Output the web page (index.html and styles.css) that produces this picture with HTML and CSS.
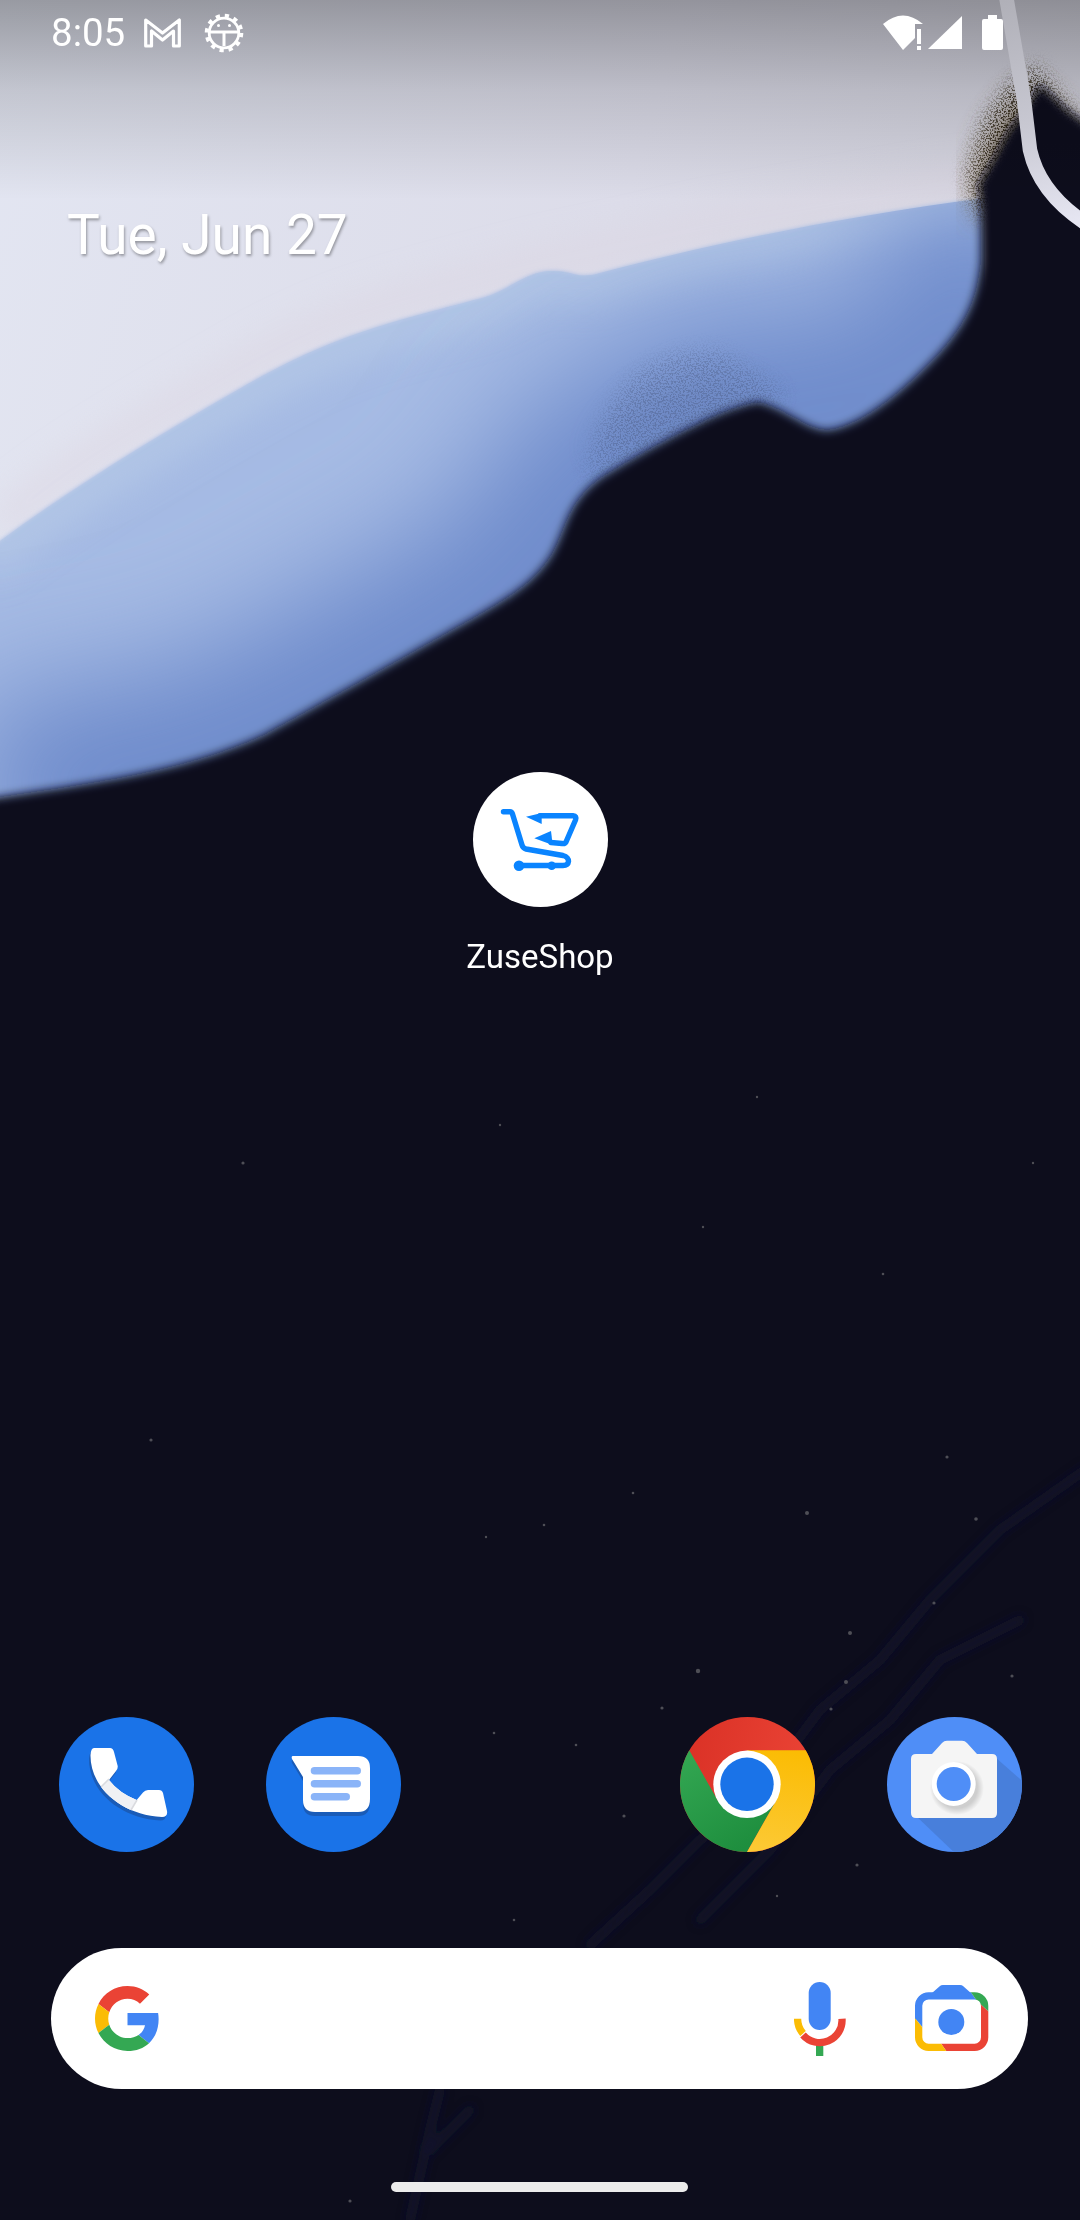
FILE: index.html
```html
<!DOCTYPE html>
<html lang="en">
<head>
<meta charset="utf-8">
<title>Home screen</title>
<link rel="stylesheet" href="styles.css">
</head>
<body>
<main class="screen">
  <svg class="wallpaper" viewBox="0 0 1080 2220" aria-hidden="true">
    <defs>
      <linearGradient id="sky" x1="0" y1="0" x2="1" y2="0.25">
        <stop offset="0" stop-color="#e3e6f2"/>
        <stop offset="0.6" stop-color="#dcdce9"/>
        <stop offset="1" stop-color="#d3d3de"/>
      </linearGradient>
      <linearGradient id="scrim" x1="0" y1="0" x2="0" y2="1">
        <stop offset="0" stop-color="#000" stop-opacity="0.33"/>
        <stop offset="0.45" stop-color="#000" stop-opacity="0.14"/>
        <stop offset="1" stop-color="#000" stop-opacity="0"/>
      </linearGradient>
      <linearGradient id="hook" gradientUnits="userSpaceOnUse" x1="1005" y1="0" x2="1060" y2="226">
        <stop offset="0" stop-color="#b0b0b8"/>
        <stop offset="0.55" stop-color="#c8c8d2"/>
        <stop offset="1" stop-color="#e6e6f2"/>
      </linearGradient>
      <clipPath id="blueClip"><path id="blueShape" d="M-20 556 C60 495 150 440 241 388 S380 325 482 298 C510 290 525 272 550 271 S575 280 600 273 C700 247 830 218 985 198 V460 L500 820 L-20 830Z"/></clipPath>
      <filter id="soft" x="-5%" y="-5%" width="110%" height="110%"><feGaussianBlur stdDeviation="2"/></filter>
      <filter id="edge" x="-5%" y="-5%" width="110%" height="110%"><feGaussianBlur stdDeviation="5"/></filter>
      <filter id="wide" x="-30%" y="-30%" width="160%" height="160%"><feGaussianBlur stdDeviation="60"/></filter>
      <filter id="mid" x="-20%" y="-20%" width="140%" height="140%"><feGaussianBlur stdDeviation="16"/></filter>
      <filter id="streak" x="-10%" y="-10%" width="120%" height="120%"><feGaussianBlur stdDeviation="5"/></filter>
      <filter id="specks" x="-30%" y="-30%" width="160%" height="160%">
        <feGaussianBlur in="SourceGraphic" stdDeviation="9" result="b"/>
        <feTurbulence type="fractalNoise" baseFrequency="0.6" numOctaves="2" seed="7"/>
        <feColorMatrix values="0 0 0 0 0  0 0 0 0 0  0 0 0 0 0  7 0 0 0 -3.300" result="n"/>
        <feComposite in="b" in2="n" operator="in"/>
      </filter>
    </defs>
    <rect class="base" width="1080" height="2220"/>
    <rect width="1080" height="830" fill="url(#sky)"/>
    <path class="blush" filter="url(#mid)" d="M0 525 C60 470 150 420 241 368 S380 305 482 278 S600 253 700 228 L985 178"/>
    <use href="#blueShape" class="blue-fill" filter="url(#soft)"/>
    <g clip-path="url(#blueClip)">
      <path class="blue-light" filter="url(#mid)" d="M-20 560 C60 500 150 445 241 393 S380 330 482 303 C510 295 525 277 550 276 S575 285 600 278 C700 252 830 223 985 203"/>
      <path class="blue-deep" filter="url(#wide)" d="M979 205 V261 C975 300 965 325 923 366 S850 425 826 428 C805 428 790 410 757 400 C720 405 650 445 600 475 C565 500 565 525 551 550 C535 580 500 600 468 618 C420 645 344 688 262 733 C180 770 100 780 -20 798"/>
    </g>
    <path class="haze" filter="url(#mid)" d="M590 460 C610 400 650 370 720 370 L780 395 L700 440Z"/>
    <path class="speck-dark" filter="url(#specks)" d="M585 480 C600 395 640 345 720 350 L790 395 L700 430Z"/>
    <path class="brown" filter="url(#mid)" d="M1030 90 L1008 112 L990 140 L976 175 L978 215 H1040 L1076 130Z"/>
    <path class="speck-brown" filter="url(#specks)" d="M1035 65 L1008 88 L985 120 L968 175 L978 215 H1040 L1085 130Z"/>
    <path class="base" filter="url(#edge)" d="M1026 108 L1008 132 L992 162 L979 184 L981 205 V261 C977 300 967 327 925 368 S852 427 828 430 C807 430 792 412 759 402 C722 407 652 447 602 477 C567 502 567 527 553 552 C537 582 502 602 470 620 C422 647 346 690 264 735 C182 772 102 782 -20 800 V2240 H1100 V133 L1067 110 L1040 84Z"/>
    <rect width="1080" height="200" fill="url(#scrim)"/>
    <path fill="none" stroke="url(#hook)" stroke-width="14.500" stroke-linecap="round" d="M1005 -10 L1024 100 L1030 150 Q1040 195 1090 226"/>
    <g class="streaks" filter="url(#streak)">
      <path d="M1085 1470 L1000 1530 L930 1600 L880 1660 L820 1710 L760 1790 L700 1840 L650 1890 L590 1945"/>
      <path d="M1020 1620 L940 1660 L890 1720 L830 1770 L770 1850 L700 1920"/>
      <path d="M440 2090 L430 2130 L410 2220"/>
      <path d="M470 2110 L430 2150"/>
    </g>
    <g class="stars">
      <circle cx="807" cy="1513" r="2"/><circle cx="698" cy="1671" r="2.200"/><circle cx="850" cy="1633" r="2"/>
      <circle cx="846" cy="1682" r="2"/><circle cx="831" cy="1709" r="1.600"/><circle cx="662" cy="1708" r="1.600"/>
      <circle cx="624" cy="1816" r="1.600"/><circle cx="857" cy="1865" r="1.600"/><circle cx="976" cy="1519" r="1.800"/>
      <circle cx="934" cy="1603" r="1.600"/><circle cx="1012" cy="1676" r="1.600"/><circle cx="494" cy="1733" r="1.300"/>
      <circle cx="576" cy="1745" r="1.300"/><circle cx="947" cy="1457" r="1.600"/><circle cx="633" cy="1493" r="1.300"/>
      <circle cx="544" cy="1525" r="1.300"/><circle cx="486" cy="1537" r="1.200"/><circle cx="350" cy="2201" r="1.600"/>
      <circle cx="514" cy="1920" r="1.300"/><circle cx="777" cy="1896" r="1.200"/><circle cx="243" cy="1163" r="1.600"/>
      <circle cx="151" cy="1440" r="1.600"/><circle cx="883" cy="1274" r="1.300"/><circle cx="703" cy="1227" r="1.200"/>
      <circle cx="1033" cy="1163" r="1.200"/><circle cx="757" cy="1097" r="1.200"/><circle cx="500" cy="1125" r="1.200"/>
    </g>
  </svg>

  <div class="ui">
    <header class="status">
      <span class="time">8:05</span>
      <svg class="ic-gmail" viewBox="143 18 38 30"><path fill="none" stroke="#fff" stroke-width="3.200" stroke-linejoin="round" d="M144.700 46 V20 L161.500 33 L178.300 20 V46 H172.500 V31 L161.500 40 L150.500 31 V46Z"/></svg>
      <svg class="ic-gear" viewBox="0 0 40 40">
        <circle cx="20" cy="20" r="17.300" fill="none" stroke="#fff" stroke-width="4" stroke-dasharray="4.200 4.890"/>
        <circle cx="20" cy="20" r="14.800" fill="none" stroke="#fff" stroke-width="2.800"/>
        <path fill="#fff" d="M6 17.500 H34 V20.500 H21.500 V33 H18.500 V20.500 H6Z"/>
        <circle cx="14.500" cy="12.500" r="1.500" fill="#fff"/><circle cx="25.500" cy="12.500" r="1.500" fill="#fff"/>
      </svg>
      <span class="status-gap"></span>
      <svg class="ic-wifi" viewBox="883 15 40 35">
        <path fill="#fff" d="M883 24 Q903 7 923 24 H915 V38 L903 50Z"/>
        <rect x="917" y="29" width="4" height="15" fill="#fff"/><rect x="917" y="46" width="4" height="4" fill="#fff"/>
      </svg>
      <svg class="ic-signal" viewBox="928 16 34 33"><path fill="#fff" d="M928 49 L962 16 V49Z"/></svg>
      <svg class="ic-battery" viewBox="982 15 21 35"><path fill="#fff" d="M988 15 H997 V19 H1001 Q1003 19 1003 21 V48 Q1003 50 1001 50 H984 Q982 50 982 48 V21 Q982 19 984 19 H988Z"/></svg>
    </header>

    <p class="date">Tue, Jun 27</p>

    <section class="app">
      <svg class="icon" viewBox="0 0 135 135">
        <circle cx="67.500" cy="67.500" r="67.500" fill="#fff"/>
        <g fill="none" stroke="#0a84ff" stroke-width="5.400" stroke-linecap="round" stroke-linejoin="round">
          <path d="M30.500 39.700 H37 Q38.700 39.700 39.500 42 L49 73 Q50 76.300 53 77 L90 83.500 Q95.500 85 95.500 89.500 Q95 93.500 90 93.500 H47"/>
          <path d="M67 43.700 H100 Q104 44 102.500 48 L93 70 Q92 72 89 71.500 L78 70.500"/>
        </g>
        <g fill="#0a84ff">
          <path d="M53 44.700 L68.700 41 V52Z"/><path d="M61.300 66.300 L78 59 L79.700 73Z"/>
          <circle cx="46" cy="93.700" r="5.300"/><circle cx="78.700" cy="93.700" r="4.300"/>
        </g>
      </svg>
      <span class="label">ZuseShop</span>
    </section>

    <nav class="dock">
      <svg class="icon" viewBox="0 0 135 135">
        <defs>
          <clipPath id="handset"><path d="M35 31 H51 Q54 31 55 35 L58.700 49 Q59 52 57 54 L50 63 Q60 76 77.700 83 L84 75.500 Q86 73 89 73 H100 Q103 73 104 76 L108 94 Q109 100 103 100 C62 98 31 70 31.500 38 Q32 31 35 31Z"/></clipPath>
        </defs>
        <circle cx="67.500" cy="67.500" r="67.500" fill="#1a73e8"/>
        <path fill="#1a5cb8" transform="translate(-1.500 3.500)" d="M35 31 H51 Q54 31 55 35 L58.700 49 Q59 52 57 54 L50 63 Q60 76 77.700 83 L84 75.500 Q86 73 89 73 H100 Q103 73 104 76 L108 94 Q109 100 103 100 C62 98 31 70 31.500 38 Q32 31 35 31Z"/>
        <path fill="#fff" d="M35 31 H51 Q54 31 55 35 L58.700 49 Q59 52 57 54 L50 63 Q60 76 77.700 83 L84 75.500 Q86 73 89 73 H100 Q103 73 104 76 L108 94 Q109 100 103 100 C62 98 31 70 31.500 38 Q32 31 35 31Z"/>
        <g clip-path="url(#handset)">
          <path fill="#f0f1f4" d="M50 62 L40 72 L68 98 L78 83Z"/>
          <path stroke="#dadbdf" stroke-width="1.600" fill="none" d="M50 62 L40 72 M78 83 L69 98"/>
        </g>
      </svg>
      <svg class="icon" viewBox="0 0 135 135">
        <circle cx="67.500" cy="67.500" r="67.500" fill="#1a73e8"/>
        <path fill="#1a5cb8" transform="translate(0 4)" d="M27 39 H92 Q104 39 104 51 V82 Q104 95 92 95 H49 Q37 95 37 83 V60 L26 42 Q25 39 27 39Z"/>
        <path fill="#fff" d="M27 39 H92 Q104 39 104 51 V82 Q104 95 92 95 H49 Q37 95 37 83 V60 L26 42 Q25 39 27 39Z"/>
        <g fill="#8ab4f8">
          <rect x="44.700" y="50" width="50.300" height="7.500" rx="3.750"/>
          <rect x="44.700" y="63" width="50.300" height="7.500" rx="3.750"/>
          <rect x="44.700" y="76" width="39.300" height="7.500" rx="3.750"/>
        </g>
      </svg>
      <span class="dock-empty"></span>
      <svg class="icon" viewBox="0 0 135 135">
        <defs>
          <linearGradient id="cRed" x1="0" y1="0" x2="1" y2="0.2"><stop offset="0" stop-color="#d93025"/><stop offset="1" stop-color="#ea4335"/></linearGradient>
          <linearGradient id="cGreen" x1="0" y1="0" x2="0.6" y2="1"><stop offset="0" stop-color="#34a853"/><stop offset="1" stop-color="#1e8e3e"/></linearGradient>
          <linearGradient id="cYellow" x1="0.5" y1="0" x2="0.4" y2="1"><stop offset="0" stop-color="#fbbc04"/><stop offset="1" stop-color="#fcc934"/></linearGradient>
        </defs>
        <circle cx="67.500" cy="67.500" r="67.500" fill="url(#cRed)"/>
        <path fill="url(#cGreen)" d="M9.300 33.300 L38 84 H96 L67 135 A67.500 67.500 0 0 1 9.300 33.300Z"/>
        <path fill="url(#cYellow)" d="M67 33.300 H125.700 A67.500 67.500 0 0 1 67 135 L96 84Z"/>
        <circle cx="67" cy="67.300" r="33.700" fill="#fff"/>
        <circle cx="67" cy="67.300" r="26.700" fill="#1a73e8"/>
      </svg>
      <svg class="icon" viewBox="0 0 135 135">
        <defs>
          <clipPath id="camClip"><circle cx="67.500" cy="67.500" r="67.500"/></clipPath>
          <radialGradient id="lensShade"><stop offset="0.75" stop-color="#000" stop-opacity="0.16"/><stop offset="1" stop-color="#000" stop-opacity="0"/></radialGradient>
        </defs>
        <circle cx="67.500" cy="67.500" r="67.500" fill="#4f8ef7"/>
        <path clip-path="url(#camClip)" fill="#487fdb" d="M108 40 L140 68 V140 H72 L28 98Z"/>
        <path fill="#f5f5f5" d="M45 37 L55 26 Q57 23.700 60 23.700 H75 Q78 23.700 80 26 L90 37 H105 Q110 37 110 42 V96 Q110 101 105 101 H29 Q24 101 24 96 V42 Q24 37 29 37Z"/>
        <circle cx="70" cy="71" r="27" fill="url(#lensShade)"/>
        <circle cx="66.700" cy="67" r="22" fill="#fff"/>
        <circle cx="66.700" cy="67" r="17" fill="#4f8ef7"/>
      </svg>
    </nav>

    <form class="search">
      <svg class="g-logo" viewBox="0 0 48 48">
        <path fill="#EA4335" d="M24 9.500c3.540 0 6.710 1.220 9.210 3.600l6.850-6.850C35.900 2.380 30.470 0 24 0 14.620 0 6.510 5.380 2.560 13.220l7.980 6.190C12.430 13.720 17.740 9.500 24 9.500z"/>
        <path fill="#4285F4" d="M46.980 24.550c0-1.570-.15-3.090-.38-4.550H24v9.020h12.940c-.58 2.960-2.260 5.480-4.780 7.180l7.730 6c4.510-4.180 7.090-10.360 7.090-17.650z"/>
        <path fill="#FBBC05" d="M10.530 28.590c-.48-1.450-.76-2.990-.76-4.590s.27-3.140.76-4.590l-7.980-6.190C.92 16.460 0 20.120 0 24c0 3.880.92 7.540 2.560 10.780l7.970-6.190z"/>
        <path fill="#34A853" d="M24 48c6.480 0 11.930-2.130 15.890-5.810l-7.730-6c-2.150 1.450-4.920 2.300-8.160 2.300-6.260 0-11.570-4.220-13.470-9.910l-7.980 6.190C6.510 42.620 14.620 48 24 48z"/>
      </svg>
      <span class="search-gap"></span>
      <svg class="mic" viewBox="0 0 52 74">
        <rect x="14.700" y="0" width="22" height="48" rx="11" fill="#4285f4"/>
        <rect x="22" y="60" width="7.300" height="14" fill="#34a853"/>
        <path fill="none" stroke="#ea4335" stroke-width="7.300" d="M9 53 A22.300 22.300 0 0 0 48 36.700"/>
        <path fill="none" stroke="#fbbc04" stroke-width="7.300" d="M3.600 36.700 A22.300 22.300 0 0 0 9 51.500"/>
      </svg>
      <svg class="lens" viewBox="0 0 74 67">
        <defs>
          <clipPath id="lBlue"><path d="M-1 -1 H50 L62 16 L8 43 L-1 32Z"/></clipPath>
          <clipPath id="lGreen"><path d="M50 -1 H75 V28 L62 16Z"/></clipPath>
          <clipPath id="lRed"><path d="M62 16 L75 28 V70 H34 L25 57Z"/></clipPath>
          <clipPath id="lYellow"><path d="M-1 32 L8 43 L25 57 L34 70 H-1Z"/></clipPath>
        </defs>
        <path fill="#4285f4" d="M17 8 L25 1 Q26 0 28 0 H45 Q47 0 48 1 L57 9Z"/>
        <g fill="none" stroke-width="7.300">
          <rect x="3.650" y="10.800" width="66" height="51.500" rx="10" stroke="#4285f4" clip-path="url(#lBlue)"/>
          <rect x="3.650" y="10.800" width="66" height="51.500" rx="10" stroke="#34a853" clip-path="url(#lGreen)"/>
          <rect x="3.650" y="10.800" width="66" height="51.500" rx="10" stroke="#ea4335" clip-path="url(#lRed)"/>
          <rect x="3.650" y="10.800" width="66" height="51.500" rx="10" stroke="#fbbc04" clip-path="url(#lYellow)"/>
        </g>
        <circle cx="36.300" cy="37" r="13" fill="#4285f4"/>
      </svg>
    </form>

    <div class="nav-handle"></div>
  </div>
</main>
</body>
</html>
```
FILE: styles.css
```css
* { box-sizing: border-box; }
html, body { margin: 0; padding: 0; background: #10101a; }
body { width: 1080px; height: 2220px; overflow: hidden; font-family: Roboto, "Liberation Sans", sans-serif; color: #fff; }
svg { display: block; flex: none; }

.screen { position: relative; width: 1080px; height: 2220px; overflow: hidden; }
.wallpaper { position: absolute; inset: 0; width: 1080px; height: 2220px; }
.base { fill: #10101a; }
.blush { fill: none; stroke: #dcd6e2; stroke-width: 30px; opacity: .55; }
.blue-fill { fill: #a6bbe4; }
.blue-light { fill: none; stroke: #b4c7e6; stroke-width: 50px; opacity: .8; }
.blue-deep { fill: none; stroke: #6d8acb; stroke-width: 190px; }
.haze { fill: #5a6d9c; opacity: .16; }
.speck-dark { fill: #2a3048; opacity: .22; }
.brown { fill: #7a6a52; opacity: .85; }
.speck-brown { fill: #3a3022; }
.streaks path { fill: none; stroke: #151c3c; stroke-width: 10; stroke-linecap: round; stroke-linejoin: round; opacity: .45; }
.stars { fill: #4e4e56; }

.ui { position: relative; display: flex; flex-direction: column; height: 100%; }

.status { display: flex; align-items: flex-start; height: 66px; padding: 0 0 0 51px; }
.time { font-size: 38.500px; line-height: 66px; height: 66px; }
.ic-gmail { width: 38px; height: 30px; margin: 18px 0 0 19px; }
.ic-gear { width: 40px; height: 40px; margin: 13px 0 0 22px; }
.status-gap { flex: 1; }
.ic-wifi { width: 40px; height: 35px; margin-top: 15px; }
.ic-signal { width: 34px; height: 33px; margin: 16px 0 0 5px; }
.ic-battery { width: 21px; height: 35px; margin: 15px 77px 0 20px; }

.date { margin: 136px 0 0 67px; font-size: 55px; line-height: 66px; height: 66px; font-weight: 400; text-shadow: 1px 2px 3px rgba(0,0,0,.35); }

.app { display: flex; flex-direction: column; align-items: center; margin-top: 504px; }
.icon { width: 135px; height: 135px; }
.label { margin-top: 28px; font-size: 33px; line-height: 44px; }

.dock { display: grid; grid-template-columns: repeat(5, 207px); justify-items: center; margin: auto 0 0 23px; }
.dock-empty { display: block; }

.search { display: flex; align-items: center; height: 141px; margin: 96px 52px 0 51px; padding: 0 39px 0 44px; background: #fff; border-radius: 71px; }
.g-logo { width: 65px; height: 65px; }
.search-gap { flex: 1; }
.mic { width: 52px; height: 74px; }
.lens { width: 74px; height: 67px; margin-left: 69px; }

.nav-handle { width: 297px; height: 10px; margin: 93px 0 28px 391px; background: #ececec; border-radius: 5px; }
```
